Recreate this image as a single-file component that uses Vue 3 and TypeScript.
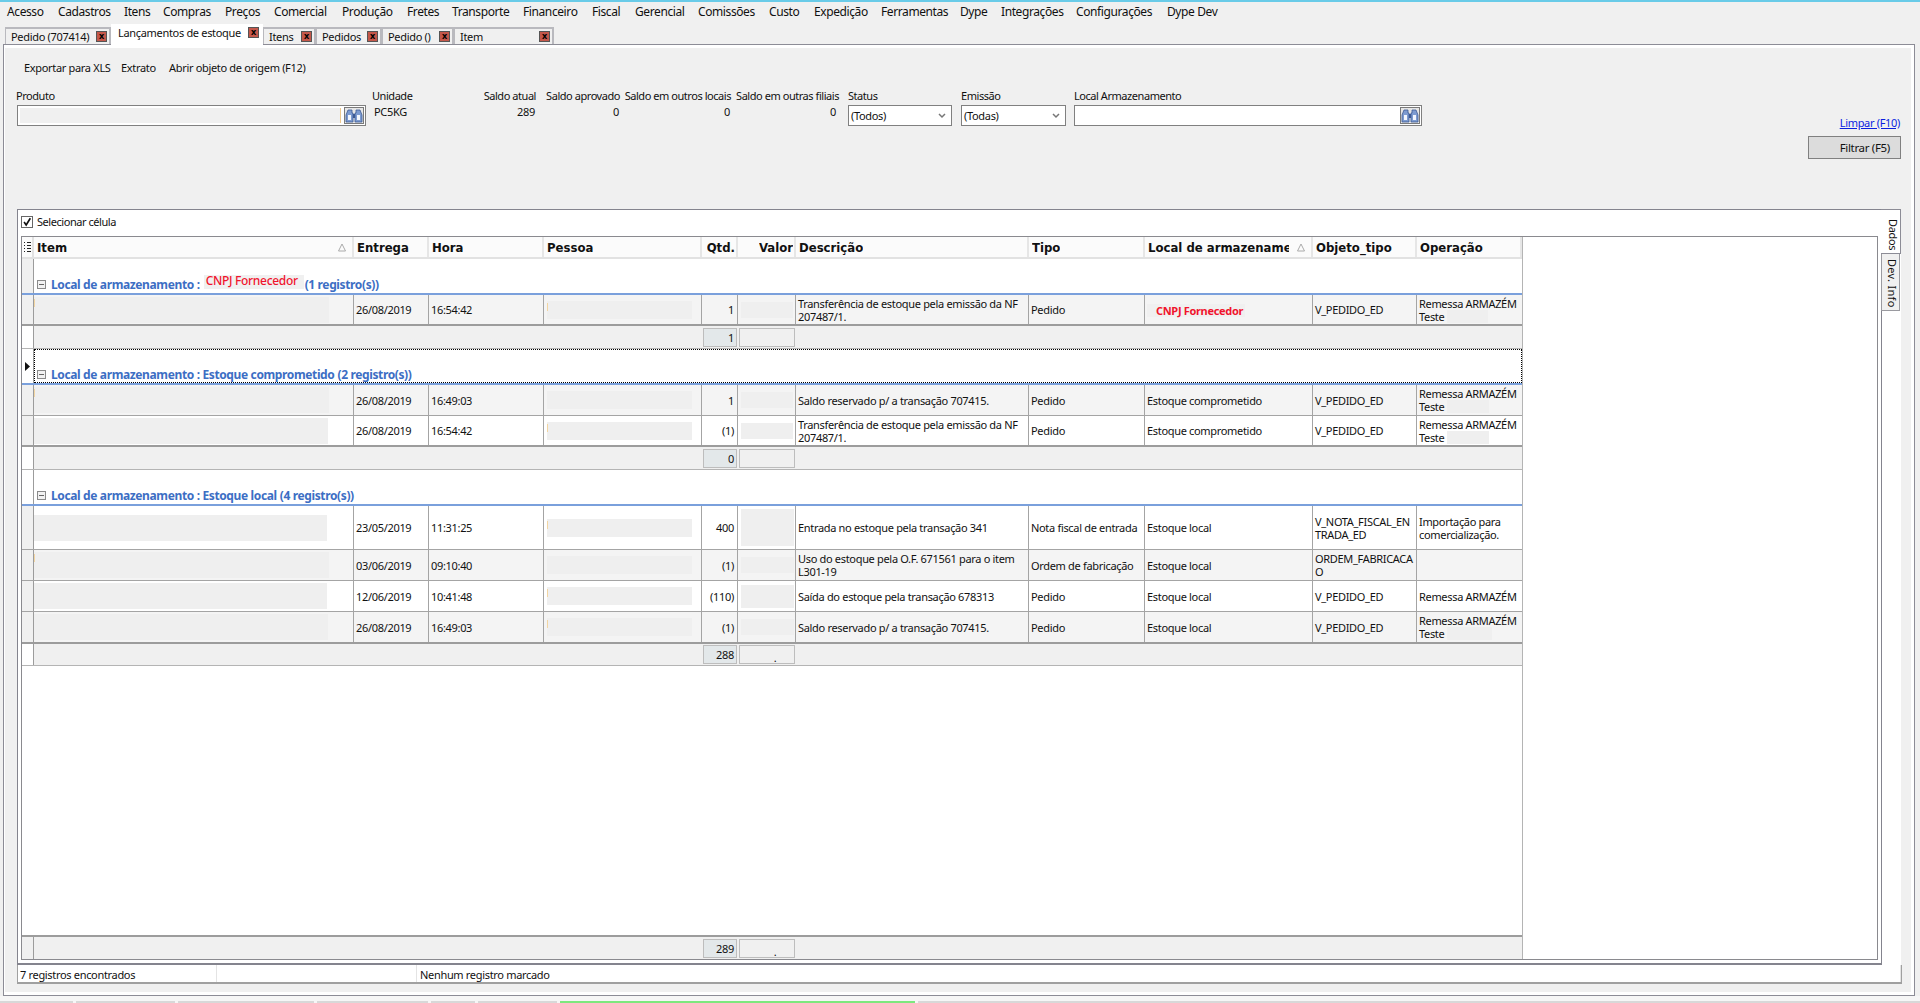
<script setup lang="ts">
interface Mask { w: number; h: number; tick?: boolean }
interface Row {
  item: Mask
  entrega: string
  hora: string
  pessoa: Mask
  qtd: string
  valor: Mask
  descricao: string
  tipo: string
  local: string
  objeto: string
  operacao: string
  opMask?: number
  alt: boolean
  h: number
  last?: boolean
}
interface Group {
  label: string
  masked?: string
  count: string
  rows: Row[]
  total: string
  totalMark?: string
  active?: boolean
  plainIndicator: boolean
  footH: number
}

const menu: [string, number][] = [
  ['Acesso', 51], ['Cadastros', 66], ['Itens', 39], ['Compras', 62], ['Preços', 49], ['Comercial', 68],
  ['Produção', 65], ['Fretes', 45], ['Transporte', 71], ['Financeiro', 69], ['Fiscal', 43], ['Gerencial', 63],
  ['Comissões', 71], ['Custo', 45], ['Expedição', 67], ['Ferramentas', 79], ['Dype', 41], ['Integrações', 75],
  ['Configurações', 91], ['Dype Dev', 60],
]

const tabs = [
  { label: 'Pedido (707414)', w: 106 },
  { label: 'Lançamentos de estoque', w: 152, active: true },
  { label: 'Itens', w: 53 },
  { label: 'Pedidos', w: 66 },
  { label: 'Pedido ()', w: 72 },
  { label: 'Item', w: 100 },
]

const saldos = [
  { label: 'Saldo atual', value: '289', cls: 'c-atual' },
  { label: 'Saldo aprovado', value: '0', cls: 'c-aprov' },
  { label: 'Saldo em outros locais', value: '0', cls: 'c-locais' },
  { label: 'Saldo em outras filiais', value: '0', cls: 'c-filiais' },
]

const columns = [
  { label: 'Item', sort: true },
  { label: 'Entrega' },
  { label: 'Hora' },
  { label: 'Pessoa' },
  { label: 'Qtd.', right: true },
  { label: 'Valor', right: true },
  { label: 'Descrição' },
  { label: 'Tipo' },
  { label: 'Local de armazenamento', sort: true },
  { label: 'Objeto_tipo' },
  { label: 'Operação' },
]

const transf = 'Transferência de estoque pela emissão da NF\n207487/1.'
const reserv = 'Saldo reservado p/ a transação 707415.'
const remessa = 'Remessa ARMAZÉM\nTeste'

const groups: Group[] = [
  {
    label: 'Local de armazenamento :',
    masked: 'CNPJ Fornecedor',
    count: '(1 registro(s))',
    total: '1',
    plainIndicator: false,
    footH: 23,
    rows: [
      {
        item: { w: 295, h: 26, tick: true }, entrega: '26/08/2019', hora: '16:54:42',
        pessoa: { w: 145, h: 18, tick: true }, qtd: '1', valor: { w: 52, h: 16 },
        descricao: transf, tipo: 'Pedido', local: 'CNPJ Fornecedor', objeto: 'V_PEDIDO_ED',
        operacao: remessa, opMask: 41, alt: true, h: 31, last: true,
      },
    ],
  },
  {
    label: 'Local de armazenamento : Estoque comprometido',
    count: '(2 registro(s))',
    total: '0',
    active: true,
    plainIndicator: true,
    footH: 23,
    rows: [
      {
        item: { w: 295, h: 26, tick: true }, entrega: '26/08/2019', hora: '16:49:03',
        pessoa: { w: 145, h: 18 }, qtd: '1', valor: { w: 52, h: 16 },
        descricao: reserv, tipo: 'Pedido', local: 'Estoque comprometido', objeto: 'V_PEDIDO_ED',
        operacao: remessa, opMask: 42, alt: true, h: 31,
      },
      {
        item: { w: 294, h: 26 }, entrega: '26/08/2019', hora: '16:54:42',
        pessoa: { w: 145, h: 18, tick: true }, qtd: '(1)', valor: { w: 52, h: 16 },
        descricao: transf, tipo: 'Pedido', local: 'Estoque comprometido', objeto: 'V_PEDIDO_ED',
        operacao: remessa, opMask: 42, alt: false, h: 31, last: true,
      },
    ],
  },
  {
    label: 'Local de armazenamento : Estoque local',
    count: '(4 registro(s))',
    total: '288',
    totalMark: '.',
    plainIndicator: true,
    footH: 22,
    rows: [
      {
        item: { w: 293, h: 26 }, entrega: '23/05/2019', hora: '11:31:25',
        pessoa: { w: 145, h: 18, tick: true }, qtd: '400', valor: { w: 53, h: 37 },
        descricao: 'Entrada no estoque pela transação 341', tipo: 'Nota fiscal de entrada', local: 'Estoque local',
        objeto: 'V_NOTA_FISCAL_EN\nTRADA_ED', operacao: 'Importação para\ncomercialização.', alt: false, h: 44,
      },
      {
        item: { w: 295, h: 26, tick: true }, entrega: '03/06/2019', hora: '09:10:40',
        pessoa: { w: 145, h: 18 }, qtd: '(1)', valor: { w: 53, h: 16 },
        descricao: 'Uso do estoque pela O.F. 671561 para o item\nL301-19', tipo: 'Ordem de fabricação', local: 'Estoque local',
        objeto: 'ORDEM_FABRICACA\nO', operacao: '', alt: true, h: 31,
      },
      {
        item: { w: 293, h: 26 }, entrega: '12/06/2019', hora: '10:41:48',
        pessoa: { w: 145, h: 18, tick: true }, qtd: '(110)', valor: { w: 53, h: 23 },
        descricao: 'Saída do estoque pela transação 678313', tipo: 'Pedido', local: 'Estoque local',
        objeto: 'V_PEDIDO_ED', operacao: 'Remessa ARMAZÉM', alt: false, h: 31,
      },
      {
        item: { w: 294, h: 26 }, entrega: '26/08/2019', hora: '16:49:03',
        pessoa: { w: 145, h: 18, tick: true }, qtd: '(1)', valor: { w: 53, h: 16 },
        descricao: reserv, tipo: 'Pedido', local: 'Estoque local', objeto: 'V_PEDIDO_ED',
        operacao: remessa, opMask: 45, alt: true, h: 32, last: true,
      },
    ],
  },
]

const strip = [
  { w: 73 }, { w: 99 }, { w: 136 }, { w: 111 }, { w: 44 }, { w: 79 }, { w: 355, green: true }, { w: 1003 },
]
</script>

<template>
  <div class="page">
    <div class="topline"></div>
    <nav class="menubar">
      <span v-for="m in menu" :key="m[0]" class="menu-item" :style="{ width: m[1] + 'px' }">{{ m[0] }}</span>
    </nav>

    <div class="tabstrip">
      <div
        v-for="t in tabs"
        :key="t.label"
        class="tab"
        :class="{ active: t.active }"
        :style="{ width: t.w + 'px' }"
      >
        <span class="tab-label">{{ t.label }}</span>
        <span class="tab-close">x</span>
      </div>
    </div>

    <main class="panel">
      <div class="panel-inner">
        <div class="toolbar">
          <span class="tool t1">Exportar para XLS</span>
          <span class="tool t2">Extrato</span>
          <span class="tool">Abrir objeto de origem (F12)</span>
        </div>

        <section class="filters">
          <div class="field c-produto">
            <label>Produto</label>
            <div class="input">
              <span class="input-mask"></span>
              <button class="find">
                <svg viewBox="0 0 18 16" width="18" height="16">
                  <path d="M3 2h4v3h1v9H1V7z" fill="#7d9bd0" stroke="#3d5a94" stroke-width=".8" />
                  <path d="M15 2h-4v3h-1v9h7V7z" fill="#7d9bd0" stroke="#3d5a94" stroke-width=".8" />
                  <path d="M3 7h3v5H3zM12 7h3v5h-3z" fill="#f2f6fd" />
                  <path d="M8 6h2v4H8z" fill="#3d5a94" />
                </svg>
              </button>
            </div>
          </div>
          <div class="field c-unidade">
            <label>Unidade</label>
            <span class="unit">PC5KG</span>
          </div>
          <div v-for="s in saldos" :key="s.label" class="field saldo" :class="s.cls">
            <label>{{ s.label }}</label>
            <span class="saldo-value">{{ s.value }}</span>
          </div>
          <div class="field c-status">
            <label>Status</label>
            <div class="select">
              <span>(Todos)</span>
              <svg viewBox="0 0 8 6" width="8" height="6"><path d="M1 1l3 3 3-3" fill="none" stroke="#777" stroke-width="1.500" /></svg>
            </div>
          </div>
          <div class="field c-emissao">
            <label>Emissão</label>
            <div class="select">
              <span>(Todas)</span>
              <svg viewBox="0 0 8 6" width="8" height="6"><path d="M1 1l3 3 3-3" fill="none" stroke="#777" stroke-width="1.500" /></svg>
            </div>
          </div>
          <div class="field c-local">
            <label>Local Armazenamento</label>
            <div class="input">
              <span class="input-blank"></span>
              <button class="find">
                <svg viewBox="0 0 18 16" width="18" height="16">
                  <path d="M3 2h4v3h1v9H1V7z" fill="#7d9bd0" stroke="#3d5a94" stroke-width=".8" />
                  <path d="M15 2h-4v3h-1v9h7V7z" fill="#7d9bd0" stroke="#3d5a94" stroke-width=".8" />
                  <path d="M3 7h3v5H3zM12 7h3v5h-3z" fill="#f2f6fd" />
                  <path d="M8 6h2v4H8z" fill="#3d5a94" />
                </svg>
              </button>
            </div>
          </div>
          <div class="actions">
            <a class="clear">Limpar (F10)</a>
            <button class="apply">Filtrar (F5)</button>
          </div>
        </section>

        <section class="data-wrap">
          <div class="data-box">
            <label class="cell-check">
              <svg viewBox="0 0 12 12" width="12" height="12" class="checkbox">
                <path d="M2.500 6l2.500 3.500L10 1.500" fill="none" stroke="#111" stroke-width="2" />
              </svg>
              Selecionar célula
            </label>
            <div class="grid-box">
              <div class="grid-inner">
                <div class="row head">
                  <div class="ind head-ind">
                    <svg viewBox="0 0 7 10" width="7" height="10">
                      <path d="M0 .5h1M3 .5h4M0 3.500h1M3 3.500h4M0 6.500h1M3 6.500h4M0 9.500h1M3 9.500h4" stroke="#222" />
                    </svg>
                  </div>
                  <div v-for="c in columns" :key="c.label" class="hcell" :class="{ right: c.right }">
                    <span class="hlabel">{{ c.label }}</span>
                    <svg v-if="c.sort" class="sort" viewBox="0 0 8 9" width="8" height="9">
                      <path d="M4 1L7.500 8H.5z" fill="none" stroke="#aaa" />
                    </svg>
                  </div>
                </div>

                <template v-for="g in groups" :key="g.label">
                  <div class="group">
                    <div class="ind" :class="{ plain: g.plainIndicator }">
                      <svg v-if="g.active" viewBox="0 0 5 9" width="5" height="9"><path d="M0 0l5 4.500-5 4.500z" fill="#111" /></svg>
                    </div>
                    <div class="group-body" :class="{ focused: g.active }">
                      <span class="expander"></span>
                      <span class="group-label">{{ g.label }}</span>
                      <span v-if="g.masked" class="group-mask">{{ g.masked }}</span>
                      <span class="group-count">{{ g.count }}</span>
                    </div>
                  </div>

                  <div
                    v-for="(r, i) in g.rows"
                    :key="i"
                    class="row data"
                    :class="{ alt: r.alt, last: r.last }"
                    :style="{ height: r.h + 'px' }"
                  >
                    <div class="ind"></div>
                    <div class="cell mask-cell">
                      <span class="mask" :class="{ tick: r.item.tick }" :style="{ width: r.item.w + 'px', height: r.item.h + 'px' }"></span>
                    </div>
                    <div class="cell">{{ r.entrega }}</div>
                    <div class="cell">{{ r.hora }}</div>
                    <div class="cell mask-cell pad">
                      <span class="mask" :class="{ tick: r.pessoa.tick }" :style="{ width: r.pessoa.w + 'px', height: r.pessoa.h + 'px' }"></span>
                    </div>
                    <div class="cell num">{{ r.qtd }}</div>
                    <div class="cell mask-cell pad">
                      <span class="mask" :style="{ width: r.valor.w + 'px', height: r.valor.h + 'px' }"></span>
                    </div>
                    <div class="cell">{{ r.descricao }}</div>
                    <div class="cell">{{ r.tipo }}</div>
                    <div class="cell">
                      <span v-if="r.local === 'CNPJ Fornecedor'" class="local-mask">{{ r.local }}</span>
                      <template v-else>{{ r.local }}</template>
                    </div>
                    <div class="cell">{{ r.objeto }}</div>
                    <div class="cell">
                      <div>{{ r.operacao }}<span v-if="r.opMask" class="op-mask" :style="{ width: r.opMask + 'px' }"></span></div>
                    </div>
                  </div>

                  <div class="row foot" :style="{ height: g.footH + 'px' }">
                    <div class="ind plain"></div>
                    <div class="fspan"></div>
                    <div class="fbox fqtd">{{ g.total }}</div>
                    <div class="fbox dotted">{{ g.totalMark }}</div>
                  </div>
                </template>

                <div class="grid-space"></div>

                <div class="row foot grand">
                  <div class="ind"></div>
                  <div class="fspan"></div>
                  <div class="fbox fqtd">289</div>
                  <div class="fbox dotted">.</div>
                </div>
              </div>
            </div>
          </div>

          <aside class="side">
            <div class="side-tab on"><span>Dados</span></div>
            <div class="side-tab off"><span>Dev. Info</span></div>
            <div class="side-rest"></div>
          </aside>
        </section>

        <footer class="statusbar">
          <span>7 registros encontrados</span>
          <span></span>
          <span>Nenhum registro marcado</span>
        </footer>
      </div>
    </main>

    <div class="strip">
      <span
        v-for="(s, i) in strip"
        :key="i"
        class="seg"
        :class="{ green: s.green }"
        :style="{ width: s.w + 'px' }"
      ></span>
    </div>
  </div>
</template>

<style>
html,
body {
  margin: 0;
  background: #f7f7f7;
}
</style>

<style scoped>
.page {
  width: 1920px;
  height: 1003px;
  display: flex;
  flex-direction: column;
  overflow: hidden;
  background: #f0f0f0;
  color: #111;
  font-family: "Noto Sans", "Liberation Sans", sans-serif;
  font-size: 11px;
  line-height: 13px;
  letter-spacing: -0.32px;
}

.topline {
  height: 2px;
  background: #69cbe8;
  flex: none;
}

.menubar {
  display: flex;
  height: 19px;
  padding-left: 7px;
  align-items: center;
  flex: none;
  font-size: 12px;
  letter-spacing: -0.4px;
}

.menu-item {
  white-space: nowrap;
  flex: none;
}

.tabstrip {
  display: flex;
  height: 23px;
  padding-left: 5px;
  align-items: flex-end;
  flex: none;
}

.tab {
  box-sizing: border-box;
  height: 17px;
  flex: none;
  display: flex;
  align-items: center;
  justify-content: space-between;
  padding: 0 2px 0 5px;
  border: 2px solid #b9b9be;
  border-bottom: 0;
  border-left-width: 1px;
  white-space: nowrap;
}

.tab-label {
  margin-top: -1px;
}

.tab.active {
  height: 21px;
  margin-bottom: -1px;
  background: #fff;
  border: 0;
  padding: 0 4px 4px 7px;
  position: relative;
  z-index: 1;
}

.tab-close {
  width: 11px;
  height: 11px;
  box-sizing: border-box;
  flex: none;
  border: 1px solid #555;
  background: #c4574a;
  color: #000;
  font-size: 9px;
  font-weight: 700;
  line-height: 8px;
  text-align: center;
  letter-spacing: 0;
}

.panel {
  flex: 1;
  min-height: 0;
  margin: 0 5px 0 3px;
  border: 1px solid #8c8c96;
  background: #fff;
  padding: 3px 3px 3px 1px;
  display: flex;
}

.panel-inner {
  flex: 1;
  min-width: 0;
  background: #f0f0f0;
  padding: 13px 0 0 11px;
  display: flex;
  flex-direction: column;
}

.toolbar {
  display: flex;
  height: 14px;
  padding-left: 8px;
  margin-bottom: 14px;
  flex: none;
}

.tool {
  white-space: nowrap;
}

.t1 {
  width: 97px;
}

.t2 {
  width: 48px;
}

.filters {
  height: 120px;
  flex: none;
  display: grid;
  grid-template-columns: 356px 110px 56px 84px 111px 115px 113px 113px 350px 1fr;
  align-items: start;
}

.field label {
  display: block;
  height: 16px;
  white-space: nowrap;
  letter-spacing: -0.45px;
}

.input {
  box-sizing: border-box;
  height: 21px;
  border: 1px solid #808080;
  outline: 0;
  background: #fff;
  display: flex;
  align-items: center;
  justify-content: space-between;
  padding: 0 1px 0 2px;
}

.c-produto .input {
  width: 349px;
  margin-left: 1px;
}

.input-mask {
  flex: 1;
  height: 15px;
  margin-right: 3px;
  background: #f0f0f0;
  border-right: 1px solid #eec98f;
}

.input-blank {
  flex: 1;
}

.find {
  width: 20px;
  height: 17px;
  padding: 0;
  border: 1px solid #7a7a7a;
  background: #e6e6e6;
  display: flex;
  align-items: center;
  justify-content: center;
}

.unit {
  display: block;
  padding-left: 2px;
}

.saldo {
  text-align: right;
}

.saldo label {
  display: block;
  padding-right: 2px;
}

.saldo-value {
  padding-right: 3px;
}

.c-filiais label {
  padding-right: 9px;
}

.c-filiais .saldo-value {
  padding-right: 12px;
}

.select {
  box-sizing: border-box;
  width: 104px;
  height: 21px;
  border: 1px solid #808080;
  background: #fff;
  display: flex;
  align-items: center;
  justify-content: space-between;
  padding: 0 5px 0 2px;
}

.c-emissao .select {
  width: 105px;
}

.c-local .input {
  width: 348px;
}

.actions {
  display: flex;
  flex-direction: column;
  align-items: flex-end;
  padding-right: 10px;
  margin-left: -80px;
}

.clear {
  margin-top: 27px;
  color: #0a1ee0;
  text-decoration: underline;
  white-space: nowrap;
  margin-right: 1px;
}

.apply {
  box-sizing: border-box;
  width: 93px;
  height: 23px;
  margin-top: 7px;
  padding: 0 10px 0 0;
  border: 1px solid #808080;
  background: #dcdcdc;
  color: #111;
  font: inherit;
  font-size: 11.500px;
  letter-spacing: -0.32px;
  text-align: right;
}

.data-wrap {
  height: 756px;
  flex: none;
  display: flex;
  margin-left: 1px;
  margin-right: 10px;
}

.data-box {
  box-sizing: border-box;
  width: 1864px;
  flex: none;
  display: flex;
  flex-direction: column;
  background: #fff;
  border: 1px solid #84848e;
  border-right: 0;
  border-bottom-width: 2px;
  padding: 0 3px 3px 3px;
}

.cell-check {
  box-sizing: border-box;
  height: 26px;
  padding-bottom: 3px;
  flex: none;
  display: flex;
  align-items: center;
  gap: 4px;
  letter-spacing: -0.45px;
}

.checkbox {
  box-sizing: border-box;
  border: 1px solid #666;
  width: 12px;
  height: 12px;
}

.grid-box {
  flex: 1;
  min-height: 0;
  border: 1px solid #8a8a8f;
  border-bottom-width: 1px;
  display: flex;
}

.grid-inner {
  width: 1500px;
  display: flex;
  flex-direction: column;
  border-right: 1px solid #b4b4b4;
}

.row {
  display: grid;
  grid-template-columns: 12px 320px 75px 115px 158px 36px 58px 233px 116px 168px 104px 105px;
  flex: none;
  box-sizing: border-box;
}

.head {
  height: 22px;
  background: #fbfbfb;
  border-bottom: 2px solid #e2e2e2;
}

.ind {
  background: #f0f0f0;
  border-right: 1px solid #9c9c9c;
  display: flex;
  align-items: center;
  justify-content: center;
}

.ind.plain {
  background: #fff;
}

.head-ind {
  background: #fbfbfb;
  border-right: 2px solid #e2e2e2;
}

.hcell {
  box-sizing: border-box;
  border-right: 2px solid #e6e6e6;
  padding: 1px 0 0 3px;
  font-size: 13px;
  line-height: 18px;
  font-weight: 700;
  letter-spacing: 0;
  font-family: "DejaVu Sans Condensed", "Liberation Sans", sans-serif;
  display: flex;
  align-items: center;
  justify-content: space-between;
  overflow: hidden;
  white-space: nowrap;
}

.hcell.right {
  justify-content: flex-end;
  padding-right: 1px;
}

.hlabel {
  overflow: hidden;
  flex: 0 1 auto;
  min-width: 0;
}

.sort {
  flex: none;
  margin: 0 6px 0 8px;
}

.group {
  box-sizing: border-box;
  height: 36px;
  display: grid;
  grid-template-columns: 12px 1fr;
  border-bottom: 2px solid #7aa0dc;
  flex: none;
}

.group-body {
  display: flex;
  align-items: flex-end;
  padding: 0 0 2px 3px;
  color: #3c6ec4;
  font-weight: 700;
  font-size: 12px;
  letter-spacing: -0.37px;
  white-space: nowrap;
}

.group-body.focused {
  outline: 1px dotted #000;
  outline-offset: -1px;
}

.expander {
  box-sizing: border-box;
  width: 9px;
  height: 9px;
  margin: 0 5px 2px 0;
  border: 1px solid #8a8a8a;
  background: linear-gradient(#666, #666) center / 5px 1px no-repeat #f2f2f2;
  flex: none;
}

.group-mask {
  box-sizing: border-box;
  width: 100px;
  height: 14px;
  margin: 0 1px 2px 4px;
  padding: 0 0 0 2px;
  background: #f0f0f0;
  color: #f0142d;
  font-weight: 500;
  line-height: 12px;
  letter-spacing: -0.3px;
}

.group-label + .group-count {
  margin-left: 3px;
}

.data {
  background: #fff;
  border-bottom: 1px solid #a4a4a4;
}

.data.alt {
  background: #f4f4f4;
}

.data.last {
  border-bottom: 2px solid #9c9c9c;
}

.cell {
  box-sizing: border-box;
  display: flex;
  align-items: center;
  padding: 0 2px;
  border-right: 1px solid #a4a4a4;
  white-space: pre;
  overflow: hidden;
}

.cell:last-child {
  border-right: 0;
}

.num {
  justify-content: flex-end;
  padding-right: 3px;
}

.mask-cell {
  padding: 0;
}

.mask-cell.pad {
  padding-left: 3px;
}

.mask {
  display: block;
  background: #efefef;
  flex: none;
  position: relative;
}

.mask.tick::before {
  content: "";
  position: absolute;
  left: 0;
  top: 2px;
  width: 1px;
  height: 8px;
  background: #f2d5a2;
}

.local-mask {
  box-sizing: border-box;
  width: 98px;
  height: 13px;
  margin: 2px 0 0 0;
  padding-left: 9px;
  color: #f0142d;
  background: #f0f0f0;
  font-weight: 700;
  white-space: nowrap;
}

.op-mask {
  display: inline-block;
  height: 13px;
  margin-left: 3px;
  background: #efefef;
  vertical-align: top;
}

.foot {
  background: #f0f0f0;
  border-bottom: 1px solid #b4b4b4;
  grid-template-columns: 12px 668px 36px 58px 1fr;
}

.fbox {
  box-sizing: border-box;
  width: 56px;
  height: 19px;
  align-self: center;
  margin-left: 1px;
  border: 1px solid #bdbdbd;
  background: #f0f0f0;
  text-align: right;
  padding-right: 2px;
  line-height: 17px;
}

.fqtd {
  width: 34px;
  margin-left: 1px;
  background: #e3e8ea;
}

.dotted {
  text-align: center;
  line-height: 24px;
  padding: 0 0 0 16px;
  overflow: hidden;
}

.grid-space {
  flex: 1;
}

.grand {
  height: 24px;
  border-top: 2px solid #9c9c9c;
  border-bottom: 0;
}

.side {
  width: 20px;
  flex: none;
  display: flex;
  flex-direction: column;
  background: #fff;
}

.side-tab {
  box-sizing: border-box;
  display: flex;
  justify-content: center;
  writing-mode: vertical-rl;
  flex: none;
}

.side-tab.on {
  height: 45px;
  border: 1px solid #8c8c96;
  border-left: 0;
  padding-top: 7px;
}

.side-tab.off {
  width: 19px;
  height: 57px;
  background: #f0f0f0;
  border: 1px solid #9a9aa0;
  border-top: 0;
  padding-top: 3px;
  letter-spacing: .3px;
}

.side-rest {
  flex: 1;
  border-left: 1px solid #84848e;
}

.statusbar {
  box-sizing: border-box;
  height: 19px;
  flex: none;
  width: 1885px;
  margin-left: 1px;
  display: grid;
  grid-template-columns: 199px 200px 1fr;
  background: #fff;
  border: 1px solid #a0a0a0;
  border-top: 0;
  border-bottom-width: 2px;
  align-items: stretch;
}

.statusbar span {
  padding: 3px 0 0 2px;
  border-right: 1px solid #e4e4e4;
}

.statusbar span:nth-child(3) {
  padding-left: 3px;
}

.strip {
  height: 7px;
  flex: none;
  display: flex;
  align-items: flex-end;
  gap: 3px;
  background: #f6f6f6;
}

.seg {
  height: 2px;
  flex: none;
  background: #d8d8d8;
}

.seg.green {
  background: #7de87d;
}
</style>
